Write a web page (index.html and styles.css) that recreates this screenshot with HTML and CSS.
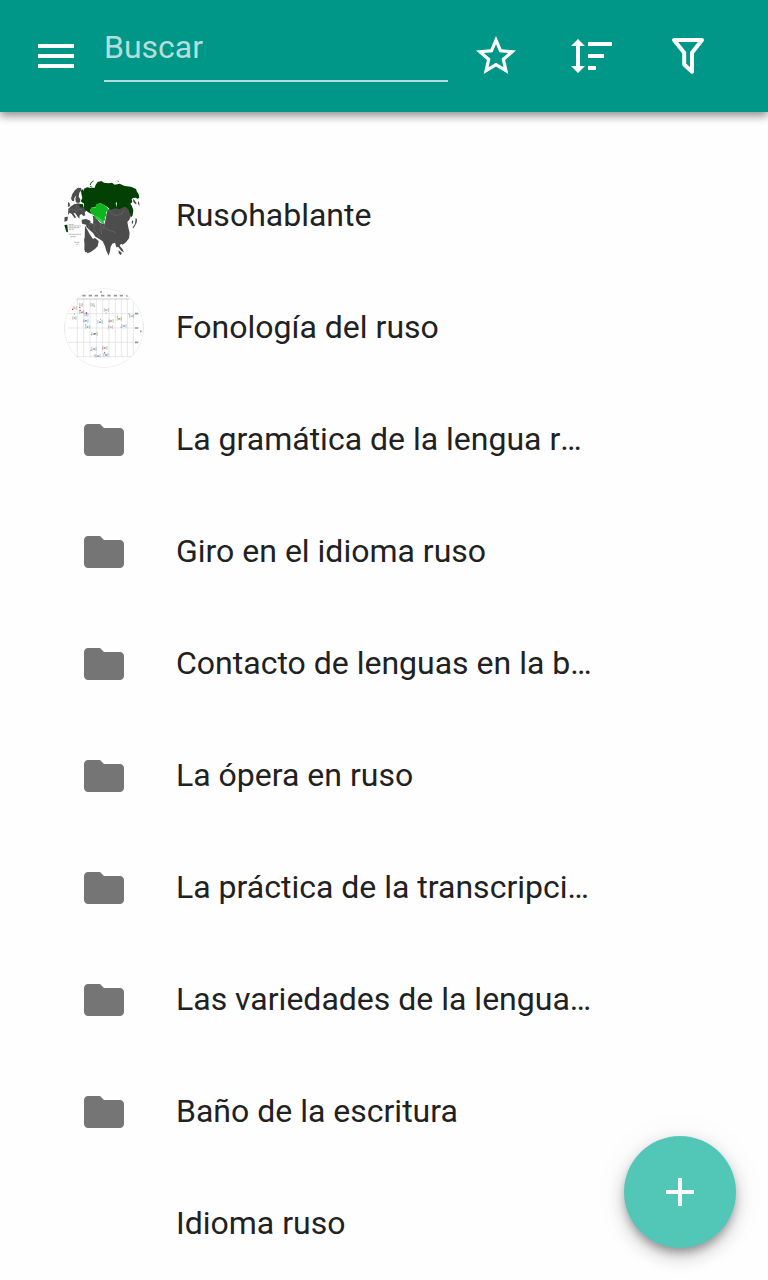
FILE: index.html
```html
<!DOCTYPE html>
<html lang="es">
<head>
    <meta charset="UTF-8">
    <meta name="viewport" content="width=device-width, initial-scale=1.0">
    <title>Idioma ruso</title>
    <link rel="stylesheet" href="styles.css">
</head>
<body>

<svg class="sprite" aria-hidden="true">
    <symbol id="folder" viewBox="0 0 24 24">
        <path d="M10 4H4c-1.1 0-1.99.9-1.99 2L2 18c0 1.1.9 2 2 2h16c1.1 0 2-.9 2-2V8c0-1.1-.9-2-2-2h-8l-2-2z"/>
    </symbol>
</svg>

<header class="toolbar">
    <button class="icon-btn menu-btn" aria-label="Menú">
        <svg viewBox="0 0 24 24"><path d="M3 18h18v-2H3v2zm0-5h18v-2H3v2zm0-7v2h18V6H3z"/></svg>
    </button>
    <div class="search">
        <input type="text" placeholder="Buscar">
    </div>
    <button class="icon-btn" aria-label="Favoritos">
        <svg viewBox="0 0 24 24"><path d="M22 9.24l-7.19-.62L12 2 9.19 8.63 2 9.24l5.46 4.73L5.82 21 12 17.27 18.18 21l-1.63-7.03L22 9.24zM12 15.4l-3.76 2.27 1-4.28-3.32-2.88 4.38-.38L12 6.1l1.71 4.04 4.38.38-3.32 2.88 1 4.28L12 15.4z"/></svg>
    </button>
    <button class="icon-btn" aria-label="Ordenar">
        <svg viewBox="0 0 48 48"><path d="M10 7l7 7h-5v20h5l-7 7-7-7h5V14H3zM20 10h24v4H20zM20 22h16v4H20zM20 34h8v4h-8z"/></svg>
    </button>
    <button class="icon-btn" aria-label="Filtrar">
        <svg viewBox="0 0 48 48"><path class="line" d="M10 8H38L28 20.7V39.7L20.2 32.6V20.7Z"/></svg>
    </button>
</header>

<ul class="list">
    <li class="item">
        <!-- map of Eurasia -->
        <svg class="avatar" viewBox="24 18 240 240">
            <!-- europe -->
            <path class="land" d="M45 85L49 72L57 60L66 53L76 54L75 62L70 68L68 80L73 88L72 97L66 99L60 97L58 87L61 76L55 84L54 94L48 92Z"/>
            <path class="land" d="M36 96L41 100L42 108L36 111ZM37 116L47 107L56 102L69 100L74 110L84 112L92 120L86 128L88 136L82 138L76 132L71 136L70 146L65 140L58 130L52 128L60 142L56 145L47 132L41 128L36 135ZM26 141L36 140L34 152L25 155ZM77 149L90 147L103 152L104 160L90 164L78 161Z"/>
            <!-- asia -->
            <path class="land" d="M104 134L118 140L132 158L146 163L150 140L154 122L162 113L200 106L212 107L221 117L225 137L221 148L214 156L217 172L221 190L219 205L210 217L200 224L195 221L191 227L201 239L203 247L196 243L187 231L181 232L177 218L169 221L164 230L162 244L158 257L151 243L147 229L140 214L129 206L118 200L111 189L101 180L91 171L90 163L105 159L112 163L109 148Z"/>
            <path class="land" d="M87 167L94 179L102 194L111 207L117 204L128 213L125 229L117 237L104 246L95 250L85 240ZM84 205L92 210L103 240L87 247ZM188 241L197 248L195 256L188 250ZM228 151L232 154L230 162L227 160Z"/>
            <path class="land" d="M239 144L243 148L242 158L236 169L231 176L230 172L237 162ZM231 87L236 91L242 101L239 103L232 96ZM246 93L250 99L250 108L246 101Z"/>
            <!-- russia -->
            <path class="russia" d="M76 71L75 62L78 57L84 63L83 57L93 52L105 54L116 53L119 44L125 36L136 33L144 38L158 40L168 38L176 44L191 41L206 48L225 50L240 57L243 65L248 73L250 83L245 86L238 83L231 84L227 88L229 96L223 101L228 109L232 121L230 136L226 142L222 132L218 119L209 110L199 113L190 118L178 115L164 119L154 111L145 106L134 100L123 103L118 112L106 113L103 121L106 132L97 127L87 119L83 111L84 101L74 94L79 84Z"/>
            <path class="russia" d="M69 101L81 103L82 114L72 111ZM183 32L190 33L187 35Z"/>
            <path class="ring" d="M103 45L105 38L113 33M102 49L109 52"/>
            <path class="central" d="M103 121L106 113L118 113L121 102L134 100L145 106L153 112L158 119L150 127L152 134L146 142L148 151L142 153L144 162L135 157L125 147L117 145L114 136L106 132Z"/>
            <path class="centraldark" d="M118 137L129 141L140 151L146 162L136 158L127 150L119 146Z"/>
            <path class="sea" d="M101 133L108 132L111 142L112 155L107 159L103 150L106 144ZM179 98L183 97L181 112Z"/>
            <path class="border" d="M160 119L165 130L180 138L196 132L205 120M153 136L137 150L146 164L142 172L158 181L171 184L181 190M113 165L117 183L127 193L132 203M132 160L136 172L129 183M38 120L48 117L61 125L69 117L80 120M63 105L61 117M145 172L136 180L137 192M103 162L112 160L121 166M98 165L99 180"/>
            <!-- legend -->
            <path class="sea" d="M20 160H74V198L80 204V254H20Z"/>
            <path class="russia" d="M25 165L34 164L36 187L31 186Z"/>
            <path class="caption" d="M38 164h16M38 168h36M38 173h33M38 178h16M38 193h37M43 200h18M55 217h16M61 223h4"/>
        </svg>
        <span class="title">Rusohablante</span>
    </li>
    <li class="item">
        <!-- vowel chart -->
        <svg class="avatar round" viewBox="24 24 240 240">
            <circle class="chart-bg" cx="144" cy="144" r="119"/>
            <path class="grid" d="M64 57V232M83 57V232M102 57V232M121 57V232M140 57V232M159 57V232M178 57V232M196 57V232M214 57V232M232 57V232M36 101H237M36 144H237M36 187H237M50 230H225M25 128V162M262 125V162"/>
            <path class="axis" d="M60 57H220"/>
            <path class="ticks" d="M79 47h10M98 47h10M116 47h10M135 47h10M154 47h10M173 47h10M191 47h10M210 47h7M237 101h10M237 144h10M237 187h10M132 36h6M252 154h5"/>
            <g class="marks">
                <text x="50" y="86">[ɪ]</text>
                <text x="69" y="79">[ɨ]</text>
                <text x="69" y="99">[ʉ]</text>
                <text x="103" y="78">[ɨ]</text>
                <text x="85" y="109">[ɪ]</text>
                <text x="143" y="93">[u]</text>
                <text x="49" y="117">[ɪ]</text>
                <text x="82" y="126">[e]</text>
                <text x="88" y="143">[ɛ]</text>
                <text x="124" y="129">[ə]</text>
                <text x="158" y="127">[o]</text>
                <text x="156" y="143">[ɔ]</text>
                <text x="182" y="119">[ʊ]</text>
                <text x="196" y="142">[o]</text>
                <text x="219" y="110">[u]</text>
                <text x="106" y="166">[æ]</text>
                <text x="106" y="211">[a]</text>
                <text x="139" y="207">[ɐ]</text>
                <text x="142" y="229">[ɑ]</text>
                <text x="118" y="230">[a]</text>
            </g>
            <path class="dots" d="M54 103h2M115 79h2M149 99h2M83 124h2M88 134h2M132 118h2M158 124h2M184 109h2M194 142h2M218 102h2M105 164h2M139 206h2M115 226h2M144 217h3"/>
            <path class="dots red" d="M48 88h3M70 83h3M71 91h3M89 99h4"/>
            <path class="dots olive" d="M103 211h3M145 219h3"/>
        </svg>
        <span class="title">Fonología del ruso</span>
    </li>
    <li class="item">
        <svg class="folder"><use href="#folder"/></svg>
        <span class="title">La gramática de la lengua r<span class="more">…</span></span>
    </li>
    <li class="item">
        <svg class="folder"><use href="#folder"/></svg>
        <span class="title">Giro en el idioma ruso</span>
    </li>
    <li class="item">
        <svg class="folder"><use href="#folder"/></svg>
        <span class="title">Contacto de lenguas en la b<span class="more">…</span></span>
    </li>
    <li class="item">
        <svg class="folder"><use href="#folder"/></svg>
        <span class="title">La ópera en ruso</span>
    </li>
    <li class="item">
        <svg class="folder"><use href="#folder"/></svg>
        <span class="title">La práctica de la transcripci<span class="more">…</span></span>
    </li>
    <li class="item">
        <svg class="folder"><use href="#folder"/></svg>
        <span class="title">Las variedades de la lengua<span class="more">…</span></span>
    </li>
    <li class="item">
        <svg class="folder"><use href="#folder"/></svg>
        <span class="title">Baño de la escritura</span>
    </li>
    <li class="item no-icon">
        <span class="title">Idioma ruso</span>
    </li>
</ul>

<button class="fab" aria-label="Añadir">
    <svg viewBox="0 0 24 24"><path d="M19 13h-6v6h-2v-6H5v-2h6V5h2v6h6v2z"/></svg>
</button>

</body>
</html>
```
FILE: styles.css
```css
* {
    box-sizing: border-box;
}
body {
    margin: 0;
    height: 100vh;
    overflow: hidden;
    font-family: Roboto, sans-serif;
    background-color: #fefefe;
    color: #212121;
}
button {
    padding: 0;
    border: none;
    background: none;
    cursor: pointer;
}
.sprite {
    display: none;
}

/* toolbar */
.toolbar {
    position: relative;
    display: flex;
    align-items: center;
    height: 112px;
    padding-right: 32px;
    background-color: #009688;
    box-shadow: 0 4px 8px rgba(0, 0, 0, 0.28), 0 3px 10px rgba(0, 0, 0, 0.22);
}
.icon-btn {
    display: flex;
    align-items: center;
    justify-content: center;
    width: 96px;
    height: 96px;
}
.icon-btn svg {
    width: 48px;
    height: 48px;
    fill: #fff;
}
.icon-btn .line {
    fill: none;
    stroke: #fff;
    stroke-width: 4;
    stroke-linejoin: round;
}
.menu-btn {
    width: 104px;
    padding-left: 8px;
}
.search {
    flex: 1;
    height: 112px;
    padding-top: 12px;
}
.search input {
    display: block;
    width: 100%;
    height: 70px;
    padding: 2px 0 0;
    border: none;
    border-bottom: 2px solid #b2dfdb;
    background: none;
    color: #fff;
    font-family: inherit;
    font-size: 32px;
    outline: none;
}
.search input::placeholder {
    color: #b2dfdb;
    opacity: 1;
}

/* list */
.list {
    margin: 0;
    padding: 48px 0 0;
    list-style: none;
}
.item {
    display: flex;
    align-items: center;
    height: 112px;
    padding-left: 64px;
}
.item.no-icon {
    padding-left: 176px;
}
.title {
    width: 424px;
    padding-bottom: 2px;
    font-size: 32px;
    line-height: 40px;
    white-space: nowrap;
}
.more {
    display: inline-block;
}
.folder {
    width: 48px;
    height: 48px;
    margin: 0 48px 0 16px;
    fill: #757575;
}
.avatar {
    width: 80px;
    height: 80px;
    margin-right: 32px;
}
.round {
    border-radius: 50%;
}

/* map picture */
.land {
    fill: #4d4d4d;
}
.russia {
    fill: #034003;
}
.central {
    fill: #0cb61c;
}
.centraldark {
    fill: #22d83a;
}
.sea {
    fill: #fefefe;
}
.ring {
    fill: none;
    stroke: #2e5a2e;
    stroke-width: 3;
}
.border {
    fill: none;
    stroke: #777;
    stroke-width: 1.5;
}
.caption {
    fill: none;
    stroke: #aaa;
    stroke-width: 2.5;
    stroke-dasharray: 7 1;
}

/* chart picture */
.chart-bg {
    fill: #fff;
    stroke: #e4e4e4;
    stroke-width: 2;
}
.grid {
    fill: none;
    stroke: #e2e2e2;
    stroke-width: 2.5;
}
.axis {
    stroke: #ccc;
    stroke-width: 3;
}
.ticks {
    stroke: #999;
    stroke-width: 5;
}
.marks {
    fill: #555;
    font-family: "DejaVu Sans", sans-serif;
    font-size: 11px;
}
.dots {
    stroke: #777;
    stroke-width: 3;
}
.dots.red {
    stroke: #c2294a;
    stroke-width: 4;
}
.dots.olive {
    stroke: #8a8a3a;
}

.fab {
    position: fixed;
    right: 32px;
    bottom: 32px;
    display: flex;
    align-items: center;
    justify-content: center;
    width: 112px;
    height: 112px;
    border-radius: 50%;
    background-color: #52c7b8;
    box-shadow: 0 6px 10px -2px rgba(0, 0, 0, 0.3), 0 8px 20px rgba(0, 0, 0, 0.2), 0 2px 36px rgba(0, 0, 0, 0.06);
}
.fab svg {
    width: 48px;
    height: 48px;
    fill: #fff;
}
```
